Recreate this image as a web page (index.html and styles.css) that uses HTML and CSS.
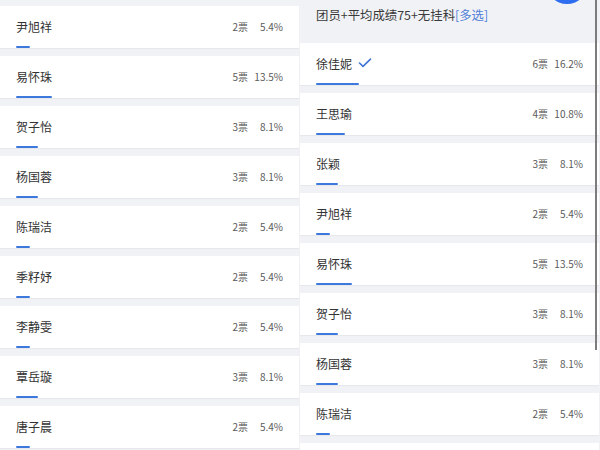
FILE: index.html
```html
<!DOCTYPE html>
<html lang="zh">
<head>
<meta charset="utf-8">
<link rel="stylesheet" href="styles.css">
</head>
<body>
<div class="page">
  <div class="panel panel-left">
    <div class="card"><div class="row"><span class="name">尹旭祥</span><span class="votes">2票</span><span class="pct">5.4%</span></div><div class="bar" style="width:5.4%"></div></div>
    <div class="card"><div class="row"><span class="name">易怀珠</span><span class="votes">5票</span><span class="pct">13.5%</span></div><div class="bar" style="width:13.5%"></div></div>
    <div class="card"><div class="row"><span class="name">贺子怡</span><span class="votes">3票</span><span class="pct">8.1%</span></div><div class="bar" style="width:8.1%"></div></div>
    <div class="card"><div class="row"><span class="name">杨国蓉</span><span class="votes">3票</span><span class="pct">8.1%</span></div><div class="bar" style="width:8.1%"></div></div>
    <div class="card"><div class="row"><span class="name">陈瑞洁</span><span class="votes">2票</span><span class="pct">5.4%</span></div><div class="bar" style="width:5.4%"></div></div>
    <div class="card"><div class="row"><span class="name">季籽妤</span><span class="votes">2票</span><span class="pct">5.4%</span></div><div class="bar" style="width:5.4%"></div></div>
    <div class="card"><div class="row"><span class="name">李静雯</span><span class="votes">2票</span><span class="pct">5.4%</span></div><div class="bar" style="width:5.4%"></div></div>
    <div class="card"><div class="row"><span class="name">覃岳璇</span><span class="votes">3票</span><span class="pct">8.1%</span></div><div class="bar" style="width:8.1%"></div></div>
    <div class="card"><div class="row"><span class="name">唐子晨</span><span class="votes">2票</span><span class="pct">5.4%</span></div><div class="bar" style="width:5.4%"></div></div>
  </div>
  <div class="panel panel-right">
    <div class="header">团员+平均成绩75+无挂科<span class="multi">[多选]</span></div>
    <div class="card"><div class="row"><span class="name">徐佳妮<svg class="check" width="14" height="10" viewBox="0 0 14 10"><path d="M1.5 5 L5 8.3 L12.5 1.2" fill="none" stroke="#3f73d6" stroke-width="1.6" stroke-linecap="round" stroke-linejoin="round"/></svg></span><span class="votes">6票</span><span class="pct">16.2%</span></div><div class="bar" style="width:16.2%"></div></div>
    <div class="card"><div class="row"><span class="name">王思瑜</span><span class="votes">4票</span><span class="pct">10.8%</span></div><div class="bar" style="width:10.8%"></div></div>
    <div class="card"><div class="row"><span class="name">张颖</span><span class="votes">3票</span><span class="pct">8.1%</span></div><div class="bar" style="width:8.1%"></div></div>
    <div class="card"><div class="row"><span class="name">尹旭祥</span><span class="votes">2票</span><span class="pct">5.4%</span></div><div class="bar" style="width:5.4%"></div></div>
    <div class="card"><div class="row"><span class="name">易怀珠</span><span class="votes">5票</span><span class="pct">13.5%</span></div><div class="bar" style="width:13.5%"></div></div>
    <div class="card"><div class="row"><span class="name">贺子怡</span><span class="votes">3票</span><span class="pct">8.1%</span></div><div class="bar" style="width:8.1%"></div></div>
    <div class="card"><div class="row"><span class="name">杨国蓉</span><span class="votes">3票</span><span class="pct">8.1%</span></div><div class="bar" style="width:8.1%"></div></div>
    <div class="card"><div class="row"><span class="name">陈瑞洁</span><span class="votes">2票</span><span class="pct">5.4%</span></div><div class="bar" style="width:5.4%"></div></div>
    <div class="card"></div>
    <div class="fab"></div>
    <div class="scrollbar"></div>
  </div>
</div>
</body>
</html>
```
FILE: styles.css
```css
html, body {
  margin: 0;
  padding: 0;
  width: 600px;
  height: 450px;
  overflow: hidden;
  background: #f1f2f6;
  font-family: "Noto Sans CJK SC", "Noto Sans", sans-serif;
}
.page {
  display: flex;
  align-items: flex-start;
  height: 450px;
  overflow: hidden;
}
.panel {
  display: flex;
  flex-direction: column;
  gap: 8px;
  flex: none;
}
.panel-left {
  width: 299px;
  padding-top: 6px;
}
.panel-right {
  position: relative;
  width: 299px;
  margin-left: 1px;
}
.header {
  flex: none;
  height: 43px;
  margin-bottom: -8px;
  padding: 5px 16px 0;
  box-sizing: border-box;
  font-size: 12.4px;
  line-height: 20px;
  color: #3a3a3a;
}
.multi {
  color: #4f7fd6;
}
.card {
  background: #fff;
  height: 42px;
  box-sizing: border-box;
  padding: 11px 16px 0;
  box-shadow: 0 1px 1px rgba(0,0,0,0.04);
  flex: none;
}
.row {
  display: flex;
  align-items: center;
  height: 18px;
}
.name {
  flex: 1;
  font-size: 12px;
  color: #333;
  display: flex;
  align-items: center;
}
.check {
  margin-left: 6px;
}
.votes {
  font-size: 10px;
  color: #5a5a5a;
}
.pct {
  width: 35px;
  text-align: right;
  font-size: 10px;
  color: #5a5a5a;
}
.bar {
  height: 2px;
  margin-top: 11px;
  background: #3d78dd;
  border-radius: 1px;
}
.fab {
  position: absolute;
  left: 246px;
  top: -38px;
  width: 42px;
  height: 42px;
  border-radius: 50%;
  background: #2e6cf0;
}
.scrollbar {
  position: absolute;
  left: 295px;
  top: 0;
  width: 2px;
  height: 350px;
  background: #7c7c7c;
}
```
